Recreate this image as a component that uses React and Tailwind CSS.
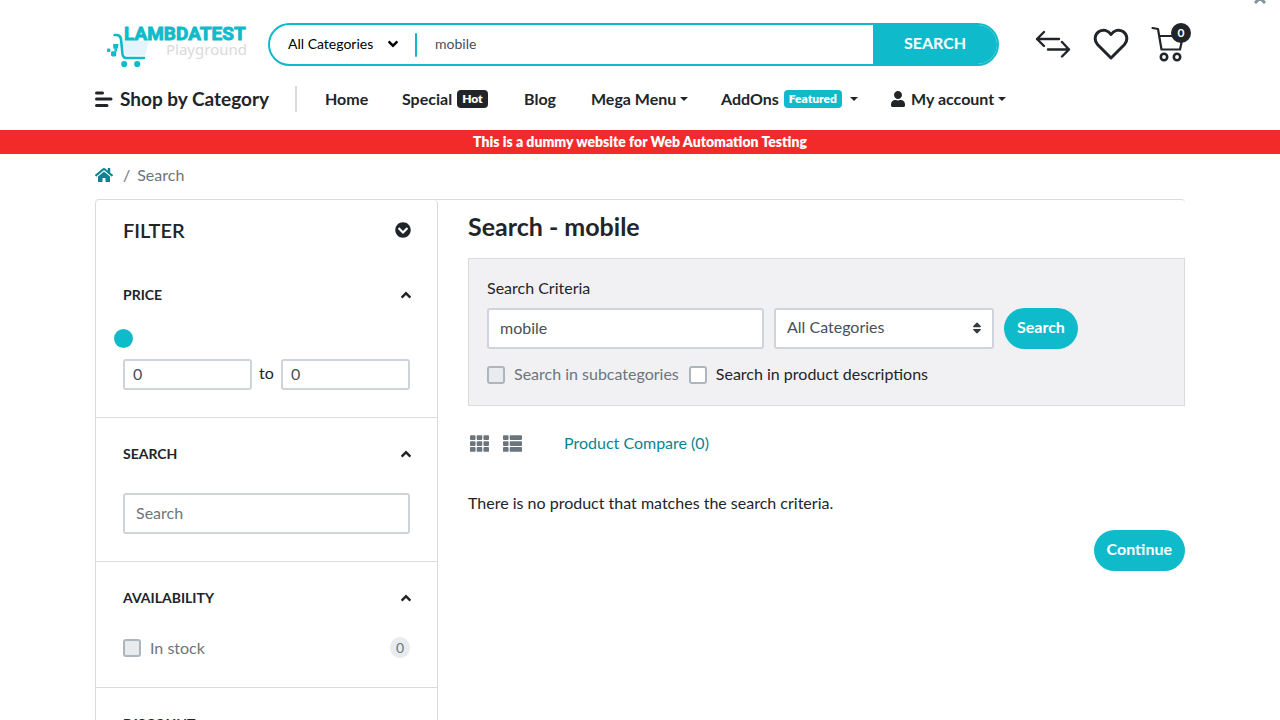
import React from "react";
import {
  FaAngleDown,
  FaAngleUp,
  FaChevronCircleDown,
  FaHome,
  FaSort,
  FaTh,
  FaThList,
  FaUser,
} from "react-icons/fa";

const field =
  "min-w-0 rounded-[3px] border-2 border-[#ced4da] bg-white text-[#495057] placeholder:text-[#6c757d] outline-none";
const checkbox =
  "size-[18px] shrink-0 appearance-none rounded-[3px] border-2 border-[#adb5bd] bg-white checked:bg-[#0fbbca] disabled:bg-[#e9ecef]";
const pill =
  "h-[41px] rounded-full bg-[#0fbbca] px-[13px] pb-[3px] text-base font-bold text-white";
const badge =
  "rounded px-[5px] text-xs leading-[18px] font-extrabold text-white";

function Logo() {
  return (
    <svg
      viewBox="0 0 142 43"
      className="h-[43px] w-[142px] overflow-visible"
      role="img"
      aria-label="LambdaTest Playground"
    >
      <path d="M17 17.500H42.500L39.500 32.500H19Z" fill="#e4f4fc" />
      <path
        d="M8.500 12H11Q14.500 12.500 15 16L16.500 31Q17 35 20.500 35H38"
        fill="none"
        stroke="#0fbbca"
        strokeWidth="2.600"
        strokeLinecap="round"
      />
      <g fill="#0fbbca">
        <circle cx="18.200" cy="41" r="3.100" />
        <circle cx="31.200" cy="41" r="3.100" />
        <path d="M8 21H12.500L12 25Q12 25.800 11 25.800H7.500L7 22Q7 21 8 21Z" />
        <rect x="5" y="28.200" width="5.300" height="5.300" rx="1.400" />
        <rect x="1" y="25.500" width="3.400" height="3.600" rx="1" />
        <rect x="8.500" y="25.500" width="2.500" height="3" />
      </g>
      <text
        x="18"
        y="17"
        fill="#0fbbca"
        fontFamily="Roboto, sans-serif"
        fontWeight="700"
        fontSize="19"
        stroke="#0fbbca"
        strokeWidth="0.900"
      >
        LAMBDATEST
      </text>
      <text
        x="60"
        y="32"
        fill="#d9dadb"
        fontFamily="'Noto Sans', sans-serif"
        fontSize="15"
      >
        Playground
      </text>
    </svg>
  );
}

function CompareIcon() {
  return (
    <svg viewBox="0 0 36 28" className="h-7 w-9" fill="none" stroke="#212529" strokeWidth="2.400" strokeLinecap="round" strokeLinejoin="round">
      <path d="M9 2L2 9L9 16M2 9H24" />
      <path d="M27 12L34 19.500L27 26.500M34 19.500H13" />
    </svg>
  );
}

function HeartIcon() {
  return (
    <svg viewBox="0 0 36 32" className="h-8 w-9" fill="none" stroke="#212529" strokeWidth="3" strokeLinejoin="round">
      <path d="M18 6.500C15 2 10 1 6 3.500C1.500 6.500 1 12.500 4.500 16.500L18 30L31.500 16.500C35 12.500 34.500 6.500 30 3.500C26 1 21 2 18 6.500Z" />
    </svg>
  );
}

function CartIcon() {
  return (
    <svg viewBox="0 0 34 36" className="h-9 w-[34px]" fill="none" stroke="#212529" strokeWidth="2.200" strokeLinecap="round" strokeLinejoin="round">
      <path d="M1.500 2L7 3L10.500 23.500H29L32 10H8.200" />
      <circle cx="13" cy="31" r="3.200" strokeWidth="2.600" />
      <circle cx="26" cy="31" r="3.200" strokeWidth="2.600" />
    </svg>
  );
}

function Caret() {
  return (
    <span className="inline-block border-x-4 border-t-4 border-x-transparent border-t-[#212529]" />
  );
}

function Header() {
  return (
    <header className="mx-auto max-w-[1110px] px-[10px]">
      <div className="flex items-start pt-[23px]">
        <a href="#" className="mr-5 ml-[11px] shrink-0">
          <Logo />
        </a>
        <form className="flex h-[43px] flex-1 items-stretch overflow-hidden rounded-full border-2 border-[#0fbbca] text-sm">
          <button type="button" className="flex w-[145px] items-center gap-3 pb-[2px] pl-[18px] text-black">
            All Categories
            <FaAngleDown className="size-4" />
          </button>
          <span className="h-6 w-[2px] self-center rounded bg-[#0fbbca]" />
          <input
            aria-label="Search products"
            defaultValue="mobile"
            className="min-w-0 flex-1 pb-px pl-[18px] text-[#495057] outline-none"
          />
          <button type="button" className="w-[124px] bg-[#0fbbca] pb-[3px] text-base font-bold text-white">
            SEARCH
          </button>
        </form>
        <nav aria-label="Shortcuts" className="mr-[-6px] ml-9 flex h-[43px] items-center gap-[22px] pb-[2px]">
          <a href="#" aria-label="Compare">
            <CompareIcon />
          </a>
          <a href="#" aria-label="Wish list">
            <HeartIcon />
          </a>
          <a href="#" className="relative pr-[6px]">
            <CartIcon />
            <span className="absolute top-[-3px] right-0 flex size-5 items-center justify-center rounded-full bg-[#212529] text-xs font-bold text-white">
              0
            </span>
          </a>
        </nav>
      </div>
      <nav aria-label="Main" className="flex h-16 items-center pt-[2px] text-base font-bold text-[#212529]">
        <a href="#" className="flex w-[202px] shrink-0 items-center gap-[7px] border-r-2 border-[#d9d9d9] text-[19px] leading-[26px]">
          <svg viewBox="0 0 18 18" className="size-[18px]" stroke="#212529" strokeWidth="3" strokeLinecap="round">
            <path d="M1.500 3H7.500M1.500 9H16M1.500 15.500H12" />
          </svg>
          Shop by Category
        </a>
        <a href="#" className="w-[104px] pl-7">Home</a>
        <a href="#" className="flex w-[123px] items-center gap-[5px] pl-px">
          Special
          <span className={`${badge} bg-[#212529]`}>Hot</span>
        </a>
        <a href="#" className="w-[67px]">Blog</a>
        <a href="#" className="flex w-[130px] items-center gap-1">
          Mega Menu <Caret />
        </a>
        <a href="#" className="flex w-[169px] items-center gap-[5px]">
          AddOns
          <span className={`${badge} mr-[3px] bg-[#0fbbca]`}>Featured</span>
          <Caret />
        </a>
        <a href="#" className="flex items-center gap-1 whitespace-nowrap">
          <FaUser className="mr-px size-4" />
          My account <Caret />
        </a>
      </nav>
    </header>
  );
}

function Section({ title, children }) {
  return (
    <section className="border-b border-[#dbdbdb] px-[27px] pb-[27px]">
      <button type="button" className="mt-[25px] mb-6 flex h-[21px] w-full items-center justify-between text-sm font-bold">
        {title}
        <FaAngleUp className="-mr-1 size-4" />
      </button>
      {children}
    </section>
  );
}

function Sidebar() {
  return (
    <aside className="w-[343px] shrink-0 rounded-t border-x border-[#dbdbdb]">
      <div className="flex h-[59px] items-center justify-between px-[27px] text-xl font-semibold">
        <h3>FILTER</h3>
        <FaChevronCircleDown className="-mr-px size-4" />
      </div>
      <Section title="PRICE">
        <input
          type="range"
          aria-label="Price"
          min="0"
          max="100"
          defaultValue="0"
          className="-ml-[9px] block h-[19px] w-[calc(100%+18px)] appearance-none bg-transparent [&::-webkit-slider-thumb]:size-[19px] [&::-webkit-slider-thumb]:appearance-none [&::-webkit-slider-thumb]:rounded-full [&::-webkit-slider-thumb]:bg-[#0fbbca]"
        />
        <div className="mt-[11px] flex items-center gap-[7px]">
          <input aria-label="Minimum price" defaultValue="0" className={`${field} h-[31px] flex-1 px-2 pb-[3px]`} />
          <span className="pb-[3px]">to</span>
          <input aria-label="Maximum price" defaultValue="0" className={`${field} h-[31px] flex-1 px-2 pb-[3px]`} />
        </div>
      </Section>
      <Section title="SEARCH">
        <div className="pt-[5px]">
          <input aria-label="Filter by keyword" placeholder="Search" className={`${field} block h-[41px] w-full px-[11px] pb-[2px]`} />
        </div>
      </Section>
      <Section title="AVAILABILITY">
        <div className="flex h-7 items-center pt-[3px] text-[#6c757d]">
          <input id="in-stock" type="checkbox" disabled className={checkbox} />
          <label htmlFor="in-stock" className="ml-[9px]">In stock</label>
          <span className="ml-auto rounded-full bg-[#e9ecef] px-[6px] text-sm leading-[21px]">0</span>
        </div>
      </Section>
      <Section title="DISCOUNT" />
    </aside>
  );
}

function Results() {
  return (
    <main className="min-w-0 flex-1 pl-[30px]">
      <h1 className="mt-[10px] text-[25px] leading-8 font-bold">Search - mobile</h1>
      <form className="mt-4 h-[148px] border border-[#dbdbdb] bg-[#f1f1f4] px-[18px] pt-[17px]">
        <label htmlFor="criteria" className="block leading-6">Search Criteria</label>
        <div className="mt-2 flex gap-[10px]">
          <input id="criteria" defaultValue="mobile" className={`${field} h-[41px] w-[277px] px-[11px] pb-[2px]`} />
          <div className="relative w-[220px]">
            <select aria-label="Category" className={`${field} h-[41px] w-full appearance-none px-[11px] pb-[3px]`}>
              <option>All Categories</option>
            </select>
            <FaSort className="pointer-events-none absolute top-[13px] right-[10px] size-[14px] text-[#343a40]" />
          </div>
          <button type="button" className={pill}>Search</button>
        </div>
        <div className="mt-[14px] flex h-6 items-center">
          <input id="sub" type="checkbox" disabled className={checkbox} />
          <label htmlFor="sub" className="mr-[10px] ml-[9px] pb-[2px] text-[#6c757d]">Search in subcategories</label>
          <input id="desc" type="checkbox" className={checkbox} />
          <label htmlFor="desc" className="ml-[9px] pb-[2px]">Search in product descriptions</label>
        </div>
      </form>
      <div className="mt-[25px] flex h-6 items-center pl-[2px] text-[#6c757d]">
        <button type="button" aria-label="Grid view"><FaTh className="size-[19px]" /></button>
        <button type="button" aria-label="List view" className="ml-[14px]"><FaThList className="size-[19px]" /></button>
        <a href="#" className="ml-[42px] text-[#0a8491]">Product Compare (0)</a>
      </div>
      <p className="mt-9 leading-6">There is no product that matches the search criteria.</p>
      <div className="mt-[15px] flex justify-end">
        <button type="button" className={pill}>Continue</button>
      </div>
    </main>
  );
}

export default function App() {
  return (
    <div className="relative h-screen overflow-hidden bg-white font-[Lato,'Noto_Sans',sans-serif] text-base text-[#212529]">
      <button type="button" aria-label="Close" className="absolute top-[-8px] right-[14px]">
        <svg viewBox="0 0 12 12" className="size-3" stroke="#84939a" strokeWidth="3">
          <path d="M1 1L11 11M11 1L1 11" />
        </svg>
      </button>
      <Header />
      <p className="h-6 bg-[#f32a2a] pb-px text-center text-sm leading-[23px] font-extrabold text-white">
        This is a dummy website for Web Automation Testing
      </p>
      <div className="mx-auto max-w-[1110px] px-[10px]">
        <nav aria-label="Breadcrumb" className="flex h-[45px] items-center gap-2 pb-[3px] text-[#6c757d]">
          <a href="#" aria-label="Home" className="mr-[2px] text-[#0a8491]">
            <FaHome className="size-[18px]" />
          </a>
          <span>/</span>
          <span className="-ml-px">Search</span>
        </nav>
        <div className="flex rounded-t border-t border-[#dbdbdb]">
          <Sidebar />
          <Results />
        </div>
      </div>
    </div>
  );
}
